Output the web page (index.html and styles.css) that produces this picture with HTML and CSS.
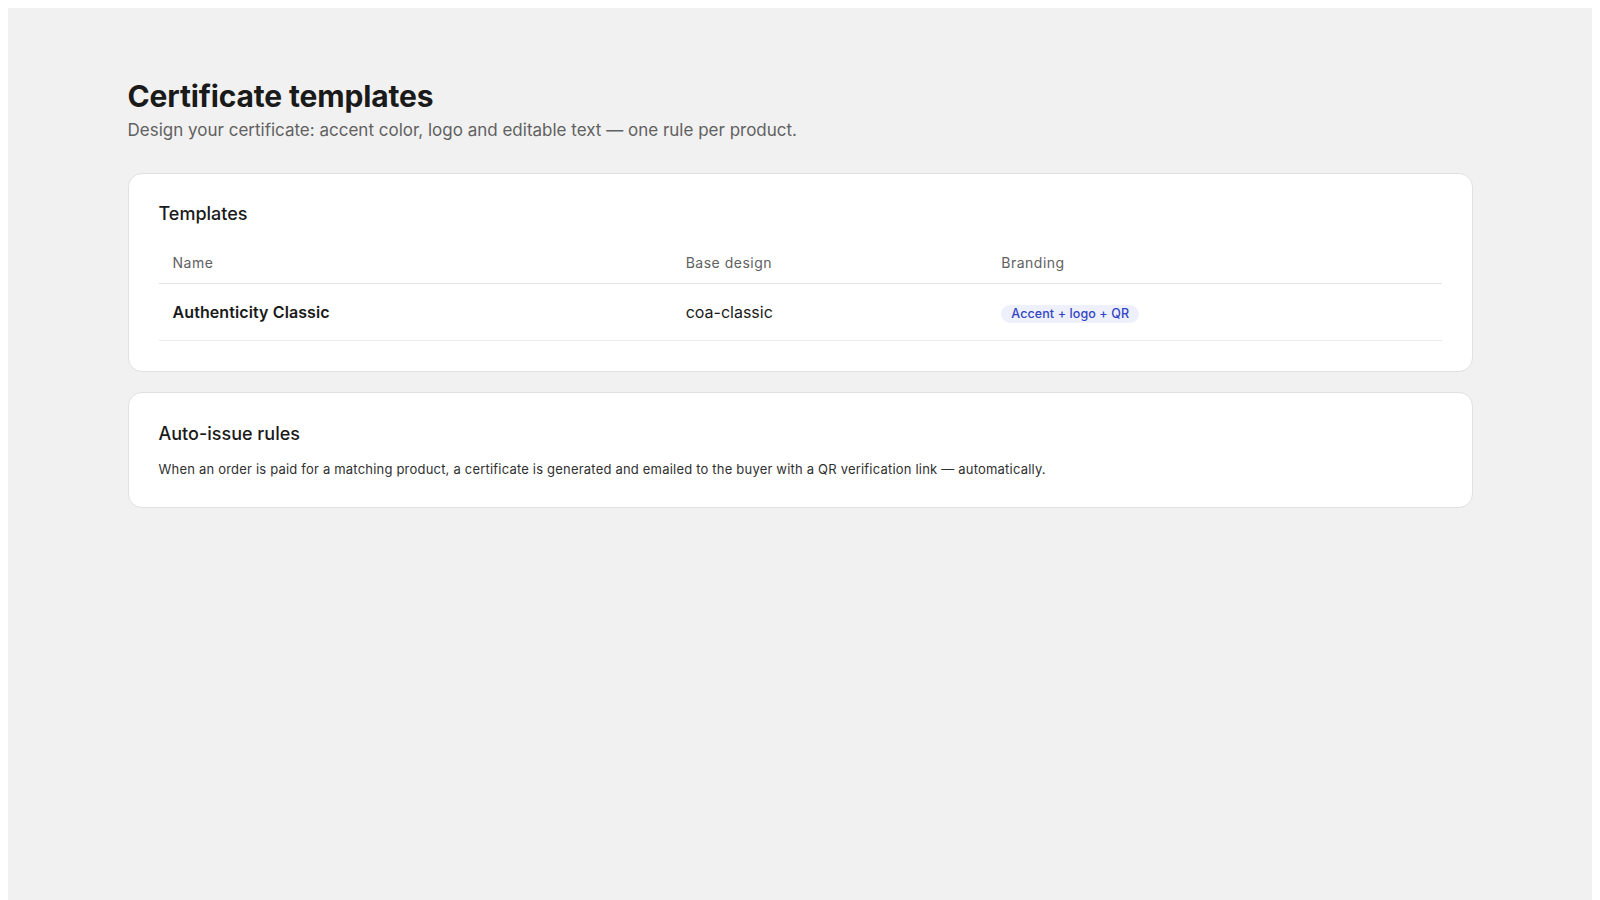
FILE: index.html
```html
<!DOCTYPE html>
<html lang="en">
<head>
<meta charset="utf-8">
<title>Certificate templates</title>
<link rel="stylesheet" href="styles.css">
</head>
<body>
<div class="app">
  <main class="page">
    <header class="page-header">
      <h1 class="page-title">Certificate templates</h1>
      <p class="page-subtitle">Design your certificate: accent color, logo and editable text — one rule per product.</p>
    </header>

    <section class="card">
      <h2 class="card-title">Templates</h2>
      <table class="table">
        <colgroup>
          <col class="col-name">
          <col class="col-base">
          <col class="col-brand">
        </colgroup>
        <thead>
          <tr>
            <th>Name</th>
            <th>Base design</th>
            <th>Branding</th>
          </tr>
        </thead>
        <tbody>
          <tr>
            <td class="cell-name">Authenticity Classic</td>
            <td>coa-classic</td>
            <td><span class="badge">Accent + logo + QR</span></td>
          </tr>
        </tbody>
      </table>
    </section>

    <section class="card card-rules">
      <h2 class="card-title">Auto-issue rules</h2>
      <p class="card-text">When an order is paid for a matching product, a certificate is generated and emailed to the buyer with a QR verification link — automatically.</p>
    </section>
  </main>
</div>
</body>
</html>
```

FILE: styles.css
```css
html, body {
  background: #ffffff;
}

body {
  margin: 8px;
  font-family: Inter, "Noto Sans", "Liberation Sans", sans-serif;
  color: #1a1a1a;
}

.app {
  background: #f1f1f1;
  min-height: 100vh;
  padding: 70px 119.5px;
  box-sizing: border-box;
}

.page {
  margin: 0 auto;
  display: flex;
  flex-direction: column;
  gap: 20px;
}

.page-header {
  display: flex;
  flex-direction: column;
  gap: 4.5px;
  margin-bottom: 12px;
}

.page-title {
  margin: 0;
  font-size: 30px;
  line-height: 36px;
  font-weight: 700;
  letter-spacing: -0.15px;
  color: #1a1a1a;
}

.page-subtitle {
  margin: 0;
  font-size: 17px;
  line-height: 22px;
  color: #616161;
}

.card {
  background: #ffffff;
  border: 1px solid #e1e1e1;
  border-radius: 14px;
  padding: 28px 30px 30px;
}

.card-rules {
  padding-top: 29px;
  padding-bottom: 29px;
}

.card-title {
  margin: 0;
  font-size: 18px;
  line-height: 24px;
  font-weight: 500;
  color: #1a1a1a;
}

.table {
  width: 100%;
  border-collapse: collapse;
  margin-top: 17px;
}

.col-name { width: 40%; }
.col-base { width: 24.6%; }

.table th {
  text-align: left;
  font-size: 14px;
  font-weight: 400;
  letter-spacing: 0.5px;
  color: #616161;
  padding: 10px 14px;
  line-height: 20px;
  border-bottom: 1px solid #e3e3e3;
}

.table td {
  font-size: 16px;
  line-height: 24px;
  padding: 16px 14px;
  color: #1a1a1a;
  border-bottom: 1px solid #ebebeb;
  vertical-align: middle;
}

.table .cell-name {
  font-weight: 600;
  letter-spacing: 0.1px;
}

.badge {
  display: inline-block;
  background: #eef0fc;
  color: #3245c4;
  font-size: 12.5px;
  line-height: 18px;
  padding: 0 10px;
  border-radius: 9px;
  font-weight: 500;
  letter-spacing: 0.1px;
}

.card-text {
  margin: 14px 0 0;
  font-size: 13px;
  line-height: 18px;
  letter-spacing: 0.2px;
  color: #303030;
}
```
